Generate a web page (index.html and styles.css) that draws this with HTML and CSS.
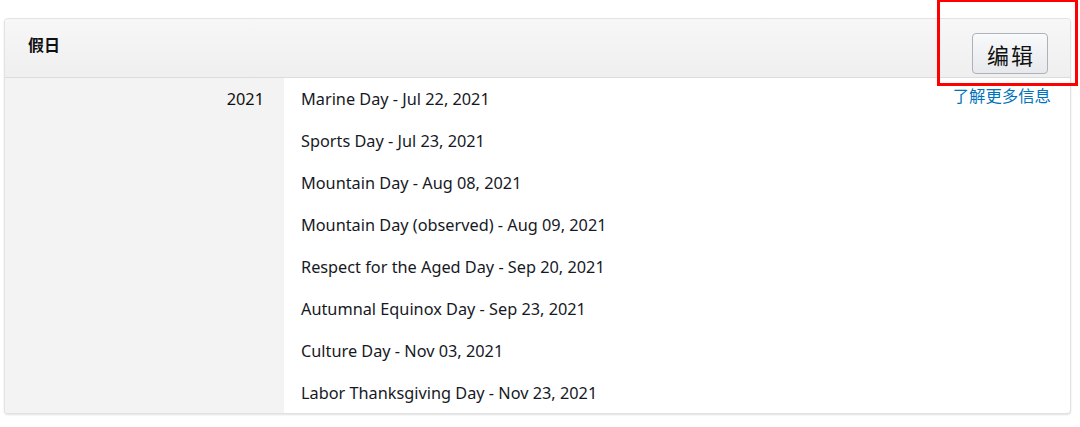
FILE: index.html
```html
<!DOCTYPE html>
<html lang="zh">
<head>
<meta charset="utf-8">
<link rel="stylesheet" href="styles.css">
</head>
<body>
<div class="page">
  <div class="card">
    <div class="card-header">
      <span class="title">假日</span>
      <button class="edit-btn">编辑</button>
    </div>
    <div class="card-body">
      <div class="year-col">2021</div>
      <div class="list-col">
        <ul class="holidays">
          <li>Marine Day - Jul 22, 2021</li>
          <li>Sports Day - Jul 23, 2021</li>
          <li>Mountain Day - Aug 08, 2021</li>
          <li>Mountain Day (observed) - Aug 09, 2021</li>
          <li>Respect for the Aged Day - Sep 20, 2021</li>
          <li>Autumnal Equinox Day - Sep 23, 2021</li>
          <li>Culture Day - Nov 03, 2021</li>
          <li>Labor Thanksgiving Day - Nov 23, 2021</li>
        </ul>
        <a class="more" href="#">了解更多信息</a>
      </div>
    </div>
  </div>
  <div class="highlight"></div>
</div>
</body>
</html>
```

FILE: styles.css
```css
html, body {
  margin: 0;
  padding: 0;
  background: #fff;
}
body {
  font-family: "Noto Sans", "Open Sans", "Noto Sans CJK SC", sans-serif;
  color: #16191f;
}
.page {
  position: relative;
  width: 1080px;
  height: 427px;
  padding: 18px 0 0 4px;
  box-sizing: border-box;
}
.card {
  width: 1065px;
  border: 1px solid #e2e2e2;
  border-radius: 4px;
  box-shadow: 0 1px 2px rgba(0,0,0,0.12);
  overflow: hidden;
  background: #fff;
}
.card-header {
  height: 58px;
  display: flex;
  align-items: center;
  justify-content: space-between;
  padding: 0 22px 0 23px;
  background: linear-gradient(#f7f7f7, #efefef);
  border-bottom: 1px solid #dcdcdc;
  box-sizing: content-box;
}
.title {
  font-family: "Noto Sans CJK SC", sans-serif;
  font-weight: 700;
  font-size: 16px;
  color: #111;
  margin-top: -8px;
}
.edit-btn {
  width: 76px;
  height: 41px;
  margin-top: 11px;
  border: 1px solid #adb1b8;
  border-radius: 4px;
  background: linear-gradient(#f8f9fb, #e7e9ec);
  box-shadow: 0 1px 0 rgba(255,255,255,0.6) inset;
  font-family: "Noto Sans CJK SC", sans-serif;
  font-size: 22px;
  color: #111;
  padding: 0 0 0 2px;
  letter-spacing: 2px;
}
.card-body {
  display: flex;
}
.year-col {
  width: 259px;
  flex: none;
  background: #f3f3f3;
  text-align: right;
  padding: 10px 20px 0 0;
  font-size: 16.3px;
  line-height: 22px;
  color: #111;
}
.list-col {
  flex: 1;
  display: flex;
  justify-content: space-between;
  padding: 10px 19px 0 17px;
}
.holidays {
  list-style: none;
  margin: 0;
  padding: 0;
}
.holidays li {
  font-size: 16.3px;
  line-height: 22px;
  height: 42px;
  color: #16191f;
}
.holidays li:last-child {
  height: 31px;
}
.more {
  font-family: "Noto Sans CJK SC", sans-serif;
  font-size: 16.4px;
  line-height: 20px;
  color: #0073bb;
  text-decoration: none;
  margin-top: -3px;
}
.highlight {
  position: absolute;
  left: 937px;
  top: -1px;
  width: 135px;
  height: 81px;
  border: 3px solid #ff0000;
}
```
